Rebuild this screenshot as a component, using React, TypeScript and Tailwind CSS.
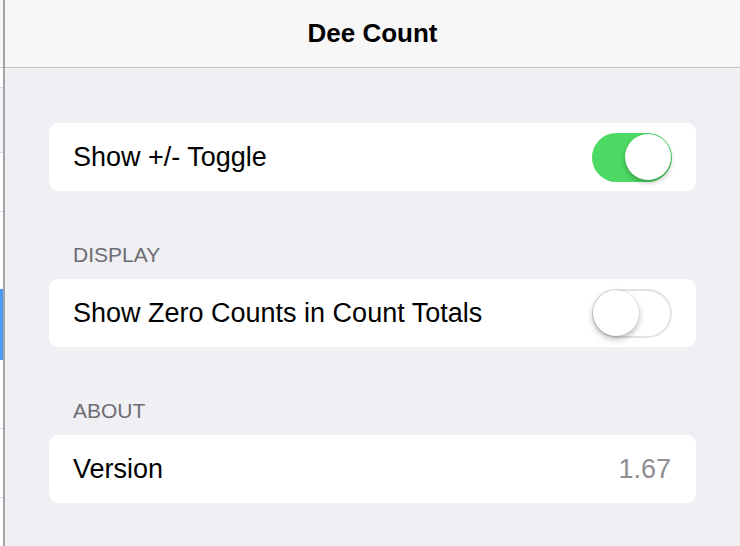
const font = { fontFamily: '"Liberation Sans", Arial, sans-serif' };

const Switch = ({ on }: { on: boolean }) =>
  on ? (
    <div className="flex h-[49px] w-[80px] items-center justify-end rounded-full bg-[#4cd964] pr-[1px]">
      <div className="h-[46px] w-[46px] rounded-full bg-white shadow-[0_3px_5px_rgba(0,0,0,0.25),0_0_0_0.5px_rgba(0,0,0,0.08)]" />
    </div>
  ) : (
    <div className="flex h-[49px] w-[80px] items-center justify-start rounded-full border-2 border-[#e3e3e6] bg-white">
      <div className="-ml-[1px] h-[46px] w-[46px] rounded-full bg-white shadow-[0_3px_6px_rgba(0,0,0,0.28),0_0_0_0.5px_rgba(0,0,0,0.1)]" />
    </div>
  );

const Card = ({ children }: { children: React.ReactNode }) => (
  <div className="flex h-[68px] items-center justify-between rounded-[9px] bg-white pl-6 pr-6 text-[27px] text-black">
    {children}
  </div>
);

const SectionLabel = ({ label }: { label: string }) => (
  <div className="mt-[52px] mb-[12px] pl-6 text-[21px] leading-[24px] text-[#6d6d72]">{label}</div>
);

export default function App() {
  return (
    <div className="flex h-[546px] w-[740px] overflow-hidden bg-[#efeff4]" style={font}>
      {/* edge of the master list behind */}
      <div className="flex w-[3px] flex-col bg-white">
        <div className="h-[68px] border-b border-[#c8c7cc] bg-[#f7f7f7]" />
        <div className="mt-[19px] h-[66px] border-y border-[#d8d8dc] bg-[#f2f2f4]" />
        <div className="mt-[58px] border-b border-[#d8d8dc]" />
        <div className="mt-[77px] h-[71px] bg-[#4a9cf7]" />
        <div className="mt-[68px] border-b border-[#d8d8dc]" />
        <div className="mt-[68px] border-b border-[#d8d8dc]" />
      </div>
      <div className="w-[2px] bg-[#a3a3a8]" />

      <div className="flex flex-1 flex-col">
        <div className="flex h-[68px] items-center justify-center border-b border-[#c4c4c8] bg-[#f7f7f7]">
          <span className="text-[26px] font-bold text-black">Dee Count</span>
        </div>

        <div className="flex flex-col px-[44px] pt-[55px]">
          <Card>
            <span>Show +/- Toggle</span>
            <Switch on />
          </Card>

          <SectionLabel label="DISPLAY" />
          <Card>
            <span>Show Zero Counts in Count Totals</span>
            <Switch on={false} />
          </Card>

          <SectionLabel label="ABOUT" />
          <Card>
            <span>Version</span>
            <span className="pr-[1px] text-[#8e8e93]">1.67</span>
          </Card>
        </div>
      </div>
    </div>
  );
}
